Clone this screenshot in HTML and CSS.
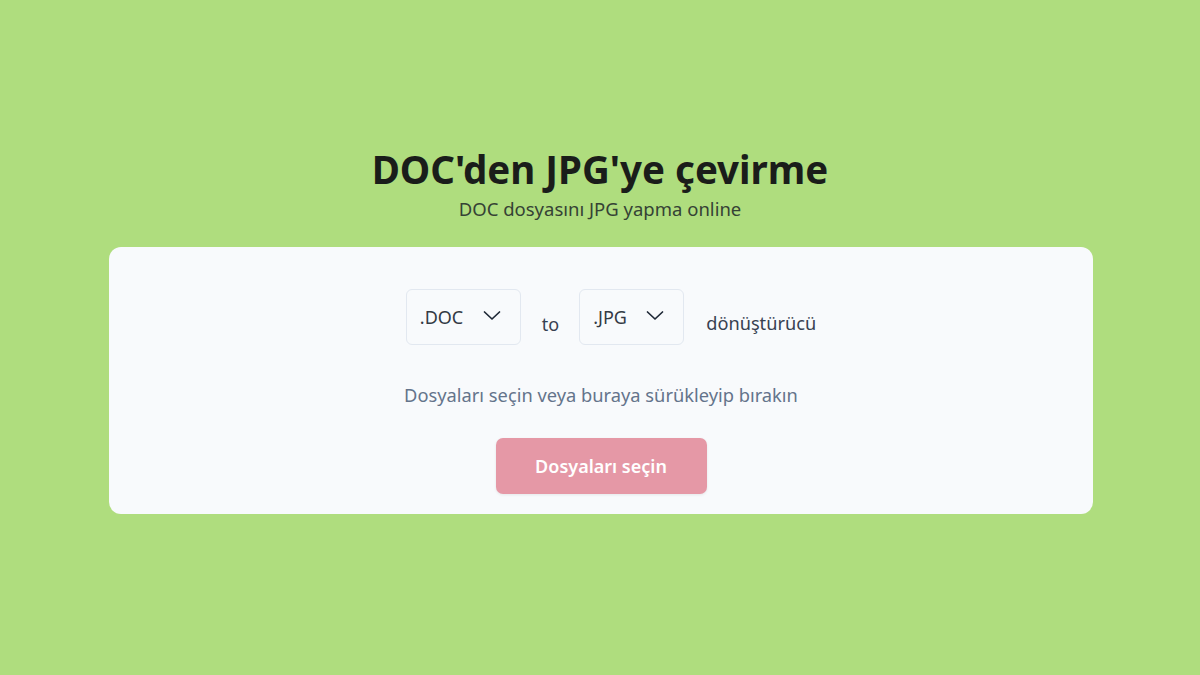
FILE: index.html
```html
<!DOCTYPE html>
<html lang="tr">
<head>
<meta charset="utf-8">
<title>DOC'den JPG'ye çevirme</title>
<link rel="stylesheet" href="styles.css">
</head>
<body>
<main class="page">
  <header class="hero">
    <h1 class="title">DOC'den JPG'ye çevirme</h1>
    <p class="subtitle">DOC dosyasını JPG yapma online</p>
  </header>
  <section class="card">
    <div class="converter">
      <div class="select">
        <span>.DOC</span>
        <svg class="chev" viewBox="0 0 20 20" width="20" height="20"><path d="M2.5 6 10 13 17.5 6" fill="none" stroke="#1f2937" stroke-width="1.7" stroke-linecap="round" stroke-linejoin="round"/></svg>
      </div>
      <span class="to">to</span>
      <div class="select">
        <span>.JPG</span>
        <svg class="chev" viewBox="0 0 20 20" width="20" height="20"><path d="M2.5 6 10 13 17.5 6" fill="none" stroke="#1f2937" stroke-width="1.7" stroke-linecap="round" stroke-linejoin="round"/></svg>
      </div>
      <span class="label">dönüştürücü</span>
    </div>
    <p class="hint">Dosyaları seçin veya buraya sürükleyip bırakın</p>
    <button class="btn" type="button">Dosyaları seçin</button>
  </section>
</main>
</body>
</html>
```
FILE: styles.css
```css
* { box-sizing: border-box; }
html, body { margin: 0; padding: 0; }
body {
  background: #afdd7e;
  font-family: "Noto Sans", "Open Sans", sans-serif;
  width: 1200px;
  height: 675px;
  overflow: hidden;
}
.page {
  display: flex;
  flex-direction: column;
  align-items: center;
  padding-top: 145px;
}
.hero { text-align: center; }
.title {
  margin: 0;
  font-size: 38.5px;
  line-height: 48px;
  font-weight: 700;
  color: #1a1d1a;
}
.subtitle {
  margin: 4px 0 0 0;
  font-size: 18.5px;
  line-height: 24px;
  color: #354235;
}
.card {
  margin: 26px 0 0 2px;
  width: 984px;
  height: 267px;
  background: #f8fafc;
  border-radius: 12px;
  display: flex;
  flex-direction: column;
  align-items: center;
  padding-top: 42px;
}
.converter {
  display: flex;
  align-items: center;
  margin-left: 20px;
}
.select {
  display: flex;
  align-items: center;
  justify-content: space-between;
  height: 56px;
  border: 1px solid #e2e8f0;
  border-radius: 6px;
  background: #f8fafc;
  padding: 0 18px 0 13px;
  font-size: 18px;
  color: #333a44;
}
.select:first-child { width: 115px; }
.select:nth-child(3) { width: 105px; }
.chev { display: block; margin-top: -2px; }
.to {
  font-size: 18px;
  color: #374151;
  margin: 0 20px 0 21px;
  padding-top: 14px;
}
.label {
  font-size: 18.2px;
  color: #374151;
  margin-left: 22px;
  padding-top: 12px;
}
.hint {
  margin: 36px 0 0 0;
  font-size: 18.3px;
  line-height: 28px;
  color: #64748b;
}
.btn {
  margin-top: 29px;
  width: 211px;
  height: 56px;
  border: none;
  border-radius: 7px;
  background: #e598a6;
  color: #ffffff;
  font-family: inherit;
  font-size: 18px;
  font-weight: 600;
  box-shadow: 0 1px 3px rgba(0,0,0,0.08);
}
```
